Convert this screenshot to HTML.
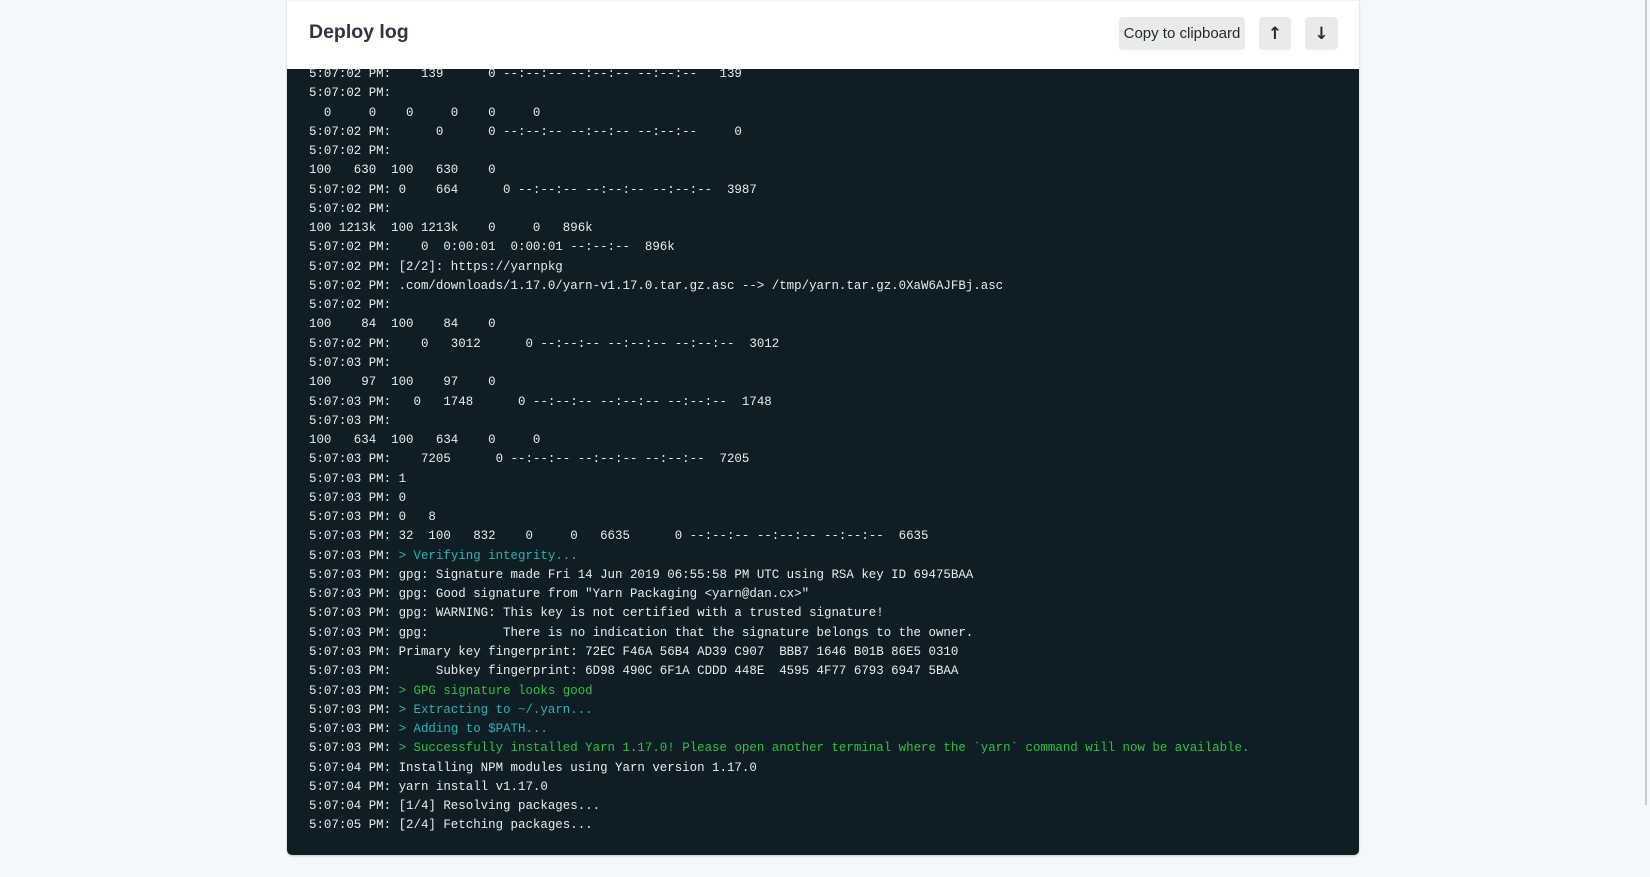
<!DOCTYPE html>
<html><head><meta charset="utf-8"><style>
html,body{margin:0;padding:0;width:1650px;height:877px;overflow:hidden;background:#f5f8fa;}
.panel{position:absolute;left:287px;top:0;width:1072px;height:855px;background:#0f1e25;border-radius:0 0 5px 5px;overflow:hidden;box-shadow:0 1px 2px rgba(0,0,0,.2);}
.hdr{position:absolute;left:0;top:0;width:1072px;height:69px;background:#fff;z-index:2;border-top:1px solid #eef0f2;box-sizing:border-box;}
.title{position:absolute;left:22px;top:20px;font:bold 19.5px "Liberation Sans",sans-serif;color:#2b3640;}
.btn{position:absolute;top:16px;height:33px;background:#e9ebeb;border-radius:4px;font:15px "Liberation Sans",sans-serif;color:#1f2a30;display:flex;align-items:center;justify-content:center;}
.btn b{font:bold 17px "DejaVu Sans",sans-serif;}
pre{position:absolute;left:22px;top:65px;margin:0;font:12.45px/19.27px "Liberation Mono",monospace;color:#e8ecee;white-space:pre;}
.c{color:#26b4b8}.g{color:#2ec23a}
.sb{position:absolute;left:1645px;top:0;width:2px;height:805px;background:#c8cccf;}
</style></head><body>
<div class="panel">
<div class="hdr"><div class="title">Deploy log</div>
<div class="btn" style="left:832px;width:126px">Copy to clipboard</div>
<div class="btn" style="left:972px;width:32px"><b>&#8593;</b></div>
<div class="btn" style="left:1018px;width:33px"><b>&#8595;</b></div>
</div>
<pre>5:07:02 PM:    139      0 --:--:-- --:--:-- --:--:--   139
5:07:02 PM:
  0     0    0     0    0     0
5:07:02 PM:      0      0 --:--:-- --:--:-- --:--:--     0
5:07:02 PM:
100   630  100   630    0
5:07:02 PM: 0    664      0 --:--:-- --:--:-- --:--:--  3987
5:07:02 PM:
100 1213k  100 1213k    0     0   896k
5:07:02 PM:    0  0:00:01  0:00:01 --:--:--  896k
5:07:02 PM: [2/2]: https://yarnpkg
5:07:02 PM: .com/downloads/1.17.0/yarn-v1.17.0.tar.gz.asc --&gt; /tmp/yarn.tar.gz.0XaW6AJFBj.asc
5:07:02 PM:
100    84  100    84    0
5:07:02 PM:    0   3012      0 --:--:-- --:--:-- --:--:--  3012
5:07:03 PM:
100    97  100    97    0
5:07:03 PM:   0   1748      0 --:--:-- --:--:-- --:--:--  1748
5:07:03 PM:
100   634  100   634    0     0
5:07:03 PM:    7205      0 --:--:-- --:--:-- --:--:--  7205
5:07:03 PM: 1
5:07:03 PM: 0
5:07:03 PM: 0   8
5:07:03 PM: 32  100   832    0     0   6635      0 --:--:-- --:--:-- --:--:--  6635
5:07:03 PM: <span class="c">&gt; Verifying integrity...</span>
5:07:03 PM: gpg: Signature made Fri 14 Jun 2019 06:55:58 PM UTC using RSA key ID 69475BAA
5:07:03 PM: gpg: Good signature from "Yarn Packaging &lt;yarn@dan.cx&gt;"
5:07:03 PM: gpg: WARNING: This key is not certified with a trusted signature!
5:07:03 PM: gpg:          There is no indication that the signature belongs to the owner.
5:07:03 PM: Primary key fingerprint: 72EC F46A 56B4 AD39 C907  BBB7 1646 B01B 86E5 0310
5:07:03 PM:      Subkey fingerprint: 6D98 490C 6F1A CDDD 448E  4595 4F77 6793 6947 5BAA
5:07:03 PM: <span class="g">&gt; GPG signature looks good</span>
5:07:03 PM: <span class="c">&gt; Extracting to ~/.yarn...</span>
5:07:03 PM: <span class="c">&gt; Adding to $PATH...</span>
5:07:03 PM: <span class="g">&gt; Successfully installed Yarn 1.17.0! Please open another terminal where the `yarn` command will now be available.</span>
5:07:04 PM: Installing NPM modules using Yarn version 1.17.0
5:07:04 PM: yarn install v1.17.0
5:07:04 PM: [1/4] Resolving packages...
5:07:05 PM: [2/4] Fetching packages...</pre>
</div>
<div class="sb"></div>
</body></html>
